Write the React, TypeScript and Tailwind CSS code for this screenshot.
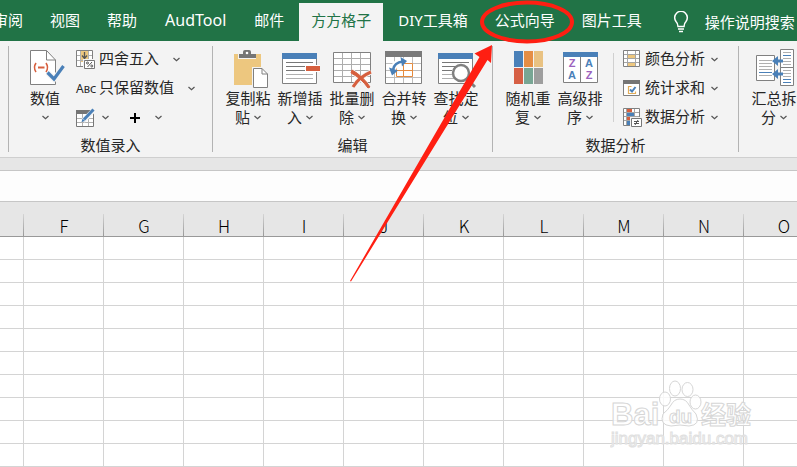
import type { ReactNode } from "react";

const Chevron = () => (
  <svg width="7" height="5" viewBox="0 0 7 5" className="shrink-0" fill="none" stroke="#555" strokeWidth="1.2">
    <path d="M.5 1l3 2.8L6.5 1" />
  </svg>
);

const Big = ({ children }: { children: ReactNode }) => (
  <svg width="40" height="38" viewBox="0 0 40 38" className="shrink-0 overflow-visible" fill="none">
    {children}
  </svg>
);

const Small = ({ children }: { children: ReactNode }) => (
  <svg width="20" height="20" viewBox="0 0 20 20" className="shrink-0 overflow-visible" fill="none">
    {children}
  </svg>
);

const NumberIcon = () => (
  <Big>
    <path d="M5.500.5h16l9 9.500v24.500h-25z" fill="#fff" stroke="#808080" />
    <path d="M21.500.5V10h9" stroke="#808080" />
    <path d="M11 13q-3 4.500 0 9M21 13q3 4.500 0 9" stroke="#d65f3e" strokeWidth="1.6" />
    <path d="M13 17.500h6.500" stroke="#d65f3e" strokeWidth="2" />
    <path d="M22.500 22.500l6.500 6.500L38.500 16" stroke="#f3f3f3" strokeWidth="5.500" />
    <path d="M22.500 22.500l6.500 6.500L38.500 16" stroke="#4a80b8" strokeWidth="3.200" />
  </Big>
);

const PasteIcon = () => (
  <Big>
    <path d="M6 4h27v31H6z" fill="#edc77f" />
    <path d="M10 3h18v6H10z" fill="#f3f3f3" />
    <path d="M11 4h4V2q0-2 2-2h4q2 0 2 2v2h5v4H11z" fill="#757575" />
    <circle cx="19" cy="3" r="1.300" fill="#fff" />
    <path d="M24 17h10l7 7v15H24z" fill="#f3f3f3" />
    <path d="M25.500 18.500h8.500l5.500 5.500v13.500h-14z" fill="#fff" stroke="#808080" />
    <path d="M34 18.500V24h5.500" stroke="#808080" />
  </Big>
);

const InsertIcon = () => (
  <Big>
    <path d="M2.500 3.500h34v30h-34z" fill="#fff" stroke="#808080" />
    <path d="M2 3h35v6H2z" fill="#4a80b8" />
    <path d="M6 12.500h27M6 16.500h27M6 20.500h27" stroke="#777" />
    <path d="M6 24.500h27M6 28.500h27" stroke="#b0b0b0" />
    <path d="M25 15h15v7H25z" fill="#fff" />
    <path d="M26 16h14v5H26z" fill="#d65f3e" />
  </Big>
);

const DeleteIcon = () => (
  <Big>
    <path d="M1.500 2.500h37v30h-37z" fill="#fff" />
    <path d="M10.500 2.500v30M19.500 2.500v30M28.500 2.500v30M1.500 8.500h37M1.500 14.500h37M1.500 20.500h37M1.500 26.500h37" stroke="#adadad" />
    <path d="M1.500 2.500h37v30h-37z" stroke="#808080" />
    <path d="M20 21l18 17M39 22Q27 27 21 38" stroke="#f3f3f3" strokeWidth="5" />
    <path d="M20 20q11 6 18 17l-2 1Q29 28 19 23z" fill="#d65f3e" stroke="#d65f3e" />
    <path d="M39 22q-12 5-18 15" stroke="#d65f3e" strokeWidth="3" />
  </Big>
);

const ConvertIcon = () => (
  <Big>
    <path d="M1.500 1.500h36v32h-36z" fill="#fff" />
    <path d="M10.500 7v26M19.500 7v26M28.500 7v26M1.500 13.500h36M1.500 20.500h36M1.500 27.500h36" stroke="#bdbdbd" />
    <path d="M1.500 1.500h36v32h-36z" stroke="#808080" />
    <path d="M1 1h37v6H1z" fill="#7a7a7a" />
    <path d="M12.500 13.500h16v13h-16zM12.500 20.500h16M19.500 13.500v13" stroke="#e58b3e" fill="#fff" />
    <path d="M9 20Q10 12 20 11.500" stroke="#fff" strokeWidth="6" />
    <path d="M9 20Q10 12.500 19 11.500" stroke="#4a80b8" strokeWidth="2.500" />
    <path d="M16.500 7l6.500 4-5 5.500zM5 17.500l9 3-6 5z" fill="#4a80b8" />
  </Big>
);

const FindIcon = () => (
  <Big>
    <path d="M2.500 3.500h34v30h-34z" fill="#fff" stroke="#808080" />
    <path d="M2 3h35v6H2z" fill="#4a80b8" />
    <path d="M6 12.500h27M6 16.500h15M6 20.500h10" stroke="#777" />
    <path d="M6 24.500h10M6 28.500h14" stroke="#b0b0b0" />
    <path d="M31 28l8 9" stroke="#f3f3f3" strokeWidth="5" />
    <circle cx="25" cy="23" r="8" fill="#fff" stroke="#808080" strokeWidth="2.500" />
    <path d="M31 29l8 8" stroke="#808080" strokeWidth="3" />
  </Big>
);

const ShuffleIcon = () => (
  <Big>
    <path d="M6 1h9v16H6z" fill="#4a80b8" />
    <path d="M16 1h9v16h-9z" fill="#e58e45" />
    <path d="M26 1h9v16h-9z" fill="#e9c282" />
    <path d="M6 18h9v16H6z" fill="#d65f44" />
    <path d="M16 18h9v16h-9z" fill="#78a694" />
    <path d="M26 18h9v16h-9z" fill="#9e9e9e" />
  </Big>
);

const SortIcon = () => (
  <Big>
    <path d="M3.500 2.500h34v30h-34z" fill="#fff" stroke="#808080" />
    <path d="M20.500 7v25" stroke="#808080" />
    <path d="M3 2h35v5H3z" fill="#4a80b8" />
    <g className="font-['Liberation_Sans'] text-[11px] font-bold" textAnchor="middle">
      <text x="12" y="17" fill="#9b62bd">Z</text>
      <text x="12" y="29" fill="#4a80b8">A</text>
      <text x="29" y="17" fill="#4a80b8">A</text>
      <text x="29" y="29" fill="#9b62bd">Z</text>
    </g>
  </Big>
);

const MergeIcon = () => (
  <Big>
    <path d="M2.500 5.500h18v25h-18z" fill="#fff" stroke="#808080" />
    <path d="M5 10.500h13M5 13.500h13M5 16.500h13M5 19.500h13M5 25.500h13" stroke="#b0b0b0" />
    <path d="M5 22.500h13" stroke="#4a80b8" />
    <path d="M26.500-.5h13v18h-13zM26.500 17.500h13v18h-13z" fill="#fff" stroke="#808080" />
    <path d="M29 2.500h8M29 8.500h8M29 11.500h8M29 14.500h8M29 20.500h8M29 23.500h8M29 26.500h8" stroke="#b0b0b0" />
    <path d="M29 5.500h8M29 29.500h8M29 32.500h8" stroke="#4a80b8" />
    <path d="M18 11l6-5v3.500h5v3h-5V16zM18 24l6-5v3.500h5v3h-5V29z" fill="#4a80b8" />
  </Big>
);

const RoundIcon = () => (
  <Small>
    <path d="M.5.5h16v16H.5z" fill="#fff" />
    <path d="M5 0h7v12H5z" fill="#edc77f" />
    <path d="M4.500.5v16M12.500.5v16M.5 5.500h4M12.500 5.500h4M.5 10.500h16" stroke="#b0b0b0" />
    <path d="M.5.500h16v16H.5z" stroke="#808080" />
    <path d="M8.500 2v6M6 5.500l2.500 3 2.500-3" stroke="#555" strokeWidth="1.300" />
    <path d="M7 9h13v11H7z" fill="#f3f3f3" />
    <path d="M8.500 10.500h10v8h-10z" fill="#fff" stroke="#777" />
    <path d="M11.500 17l4.500-5" stroke="#555" />
    <circle cx="11.500" cy="13" r="1" stroke="#555" />
    <circle cx="15.800" cy="16" r="1" stroke="#555" />
  </Small>
);

const EditIcon = () => (
  <Small>
    <path d="M.5 2.500h17v16H.5z" fill="#fff" />
    <path d="M6.500 6v12M12.500 6v12M.5 10.500h17M.5 14.500h17" stroke="#b0b0b0" />
    <path d="M.5 2.500h17v16H.5z" stroke="#777" />
    <path d="M0 2h18v4H0z" fill="#757575" />
    <path d="M7 13L19 1" stroke="#f3f3f3" strokeWidth="5" />
    <path d="M8 11.500L17.500 1.500" stroke="#4a80b8" strokeWidth="3" />
    <path d="M5.500 14l1-3.500 2.500 2.500z" fill="#4a80b8" />
  </Small>
);

const ColorIcon = () => (
  <Small>
    <path d="M1.500.5h16v16h-16z" fill="#fff" />
    <path d="M5 4h8v4H5zM5 12h8v4H5z" fill="#edc77f" />
    <path d="M5.500.5v16M13.500.5v16M1.500 4.500h16M1.500 8.500h16M1.500 12.500h16" stroke="#a5a5a5" />
    <path d="M1.500.5h16v16h-16z" stroke="#808080" />
  </Small>
);

const SumIcon = () => (
  <Small>
    <path d="M1.500 1.500h16v15h-16z" fill="#fff" stroke="#808080" />
    <path d="M1 1h17v4H1z" fill="#757575" />
    <path d="M9.500 7.500h-3v7h7v-2" stroke="#e2ad5a" strokeWidth="1.200" />
    <path d="M8 10.500l2 2L13.500 8" stroke="#4a80b8" strokeWidth="2" />
  </Small>
);

const DataIcon = () => (
  <Small>
    <path d="M1.500.5h16v17h-16z" fill="#fff" />
    <path d="M5 1h5v3H5zM5 9h3v3H5z" fill="#d65f3e" />
    <path d="M5 5h8v3H5zM5 13h3v4H5z" fill="#4a80b8" />
    <path d="M4.500.5v17M12.500.5v9M1.500 4.500h16M1.500 8.500h16M1.500 12.500h7" stroke="#a5a5a5" />
    <path d="M1.500.5h16v17h-16z" stroke="#808080" />
    <path d="M8 9h13v12H8z" fill="#f3f3f3" />
    <path d="M9.500 10.500h10v8h-10z" fill="#fff" stroke="#777" />
    <path d="M12 13.500h5M12 15.500h5M16 12l-3 5" stroke="#555" />
  </Small>
);

const BulbIcon = () => (
  <svg width="16" height="22" viewBox="0 0 16 22" className="shrink-0" fill="none" stroke="#fff" strokeWidth="1.500">
    <path d="M5 15.500q0-3-2-5A6.300 6.300 0 1 1 13 10.500q-2 2-2 5zM5 18h6" />
    <path d="M6 20.500h4" />
  </svg>
);

const tabs = ["审阅", "视图", "帮助", "AudTool", "邮件", "方方格子", "DIY工具箱", "公式向导", "图片工具"];
const columns = ["F", "G", "H", "I", "J", "K", "L", "M", "N", "O"];
const rows = Array.from({ length: 10 }, (_, i) => i);

const tabStyle = (tab: string) => {
  if (tab === "方方格子") return "px-3 bg-[#f3f3f3] text-[#217346]";
  if (tab === "AudTool") return "px-[13px] text-base";
  return "px-3";
};

const BigButton = ({ icon, top, bottom }: { icon: ReactNode; top: string; bottom?: string }) => (
  <button className="flex w-[52px] shrink-0 flex-col items-center pt-[5px] leading-[19px]">
    {icon}
    <span className="mt-px whitespace-nowrap">{top}</span>
    <span className="flex h-[19px] items-center gap-1">
      {bottom}
      <Chevron />
    </span>
  </button>
);

const RowButton = ({ icon, text, wide }: { icon: ReactNode; text?: string; wide?: boolean }) => (
  <button className="flex h-[29px] items-center whitespace-nowrap">
    {icon}
    {text && <span className="ml-[3px] pb-0.5">{text}</span>}
    <span className={wide ? "ml-3.5" : "ml-1.5"}>
      <Chevron />
    </span>
  </button>
);

const Group = ({ label, className, children }: { label?: string; className: string; children: ReactNode }) => (
  <section className="shrink-0 pt-1">
    <div className={`flex h-[87px] ${className}`}>{children}</div>
    <h2 className="mt-1 h-5 text-center leading-[18px]">{label}</h2>
  </section>
);

const Separator = () => <div className="mt-[5px] mb-1 w-px shrink-0 bg-[#b3b3b3]" />;

const BaiduMark = () => (
  <svg width="146" height="74" viewBox="0 0 146 74" className="pointer-events-none absolute top-[378px] right-[41px]" fill="#fff" stroke="#d6d6d6" fillOpacity="0.800">
    <ellipse cx="55" cy="21" rx="5.500" ry="7" />
    <ellipse cx="65" cy="10.500" rx="5.500" ry="7.500" />
    <ellipse cx="77.500" cy="11.500" rx="5.500" ry="7" />
    <ellipse cx="85.500" cy="24" rx="5.500" ry="7" />
    <path d="M70 21q6 0 9 6 3 5 7 9 5 11-7 12-9-2-18 0-12-1-8-12 5-4 8-9 3-6 9-6z" />
    <g className="font-['Liberation_Sans'] font-bold">
      <text x="1" y="47" className="text-[31px]">Bai</text>
      <text x="59" y="45" className="text-[19px]">du</text>
    </g>
    <text x="91" y="46" className="font-['Noto_Sans_CJK_SC'] text-[25px] font-bold">经验</text>
    <text x="1" y="66" stroke="#e0e0e0" className="font-['Liberation_Sans'] text-[17px]">jingyan.baidu.com</text>
  </svg>
);

export default function App() {
  return (
    <div className="relative w-full overflow-hidden bg-white font-['Noto_Sans','Noto_Sans_CJK_SC',sans-serif] text-[15px] text-[#262626]">
      <nav className="-ml-[19px] flex h-[41px] items-end gap-[3px] bg-[#217346] whitespace-nowrap text-white">
        {tabs.map(tab => (
          <button key={tab} className={`h-[38px] shrink-0 pb-1 ${tabStyle(tab)}`}>
            {tab}
          </button>
        ))}
        <button className="ml-3 flex h-[38px] shrink-0 items-center gap-4 px-1">
          <BulbIcon />
          操作说明搜索
        </button>
      </nav>

      <div className="flex overflow-hidden border-b border-[#cfcfcf] bg-[#f3f3f3] pb-px">
        <div className="w-2 shrink-0" />
        <Separator />
        <Group label="数值录入" className="w-[203px] pl-2.5">
          <BigButton icon={<NumberIcon />} top="数值" />
          <div className="ml-[5px]">
            <RowButton icon={<RoundIcon />} text="四舍五入" wide />
            <RowButton icon={<span className="w-5 text-[12px] [font-variant:small-caps]">Abc</span>} text="只保留数值" wide />
            <div className="flex gap-5">
              <RowButton icon={<EditIcon />} />
              <RowButton
                wide
                icon={
                  <svg width="12" height="12" viewBox="0 0 12 12" stroke="#000" strokeWidth="2">
                    <path d="M1 6h10M6 1v10" />
                  </svg>
                }
              />
            </div>
          </div>
        </Group>
        <Separator />
        <Group label="编辑" className="w-[279px] pl-[9px]">
          <BigButton icon={<PasteIcon />} top="复制粘" bottom="贴" />
          <BigButton icon={<InsertIcon />} top="新增插" bottom="入" />
          <BigButton icon={<DeleteIcon />} top="批量删" bottom="除" />
          <BigButton icon={<ConvertIcon />} top="合并转" bottom="换" />
          <BigButton icon={<FindIcon />} top="查找定" bottom="位" />
        </Group>
        <Separator />
        <Group label="数据分析" className="w-[245px] pl-[9px]">
          <BigButton icon={<ShuffleIcon />} top="随机重" bottom="复" />
          <BigButton icon={<SortIcon />} top="高级排" bottom="序" />
          <div className="mr-2 ml-[7px] mt-2 mb-2.5 w-px bg-[#d0d0d0]" />
          <div>
            <RowButton icon={<ColorIcon />} text="颜色分析" />
            <RowButton icon={<SumIcon />} text="统计求和" />
            <RowButton icon={<DataIcon />} text="数据分析" />
          </div>
        </Group>
        <Separator />
        <Group className="pl-[9px]">
          <BigButton icon={<MergeIcon />} top="汇总拆" bottom="分" />
        </Group>
      </div>

      <div className="h-3 bg-[#e6e6e6]" />
      <input aria-label="编辑栏" className="block h-8 w-full border-y border-[#c6c6c6] bg-[#fdfdfd] px-3 outline-none" />

      <table className="w-[824px] table-fixed border-separate border-spacing-0">
        <thead>
          <tr className="bg-[#e6e6e6] text-[17px] text-black">
            <th className="h-[35px] w-6 border-b border-[#999] bg-[linear-gradient(#d4d4d4,#999)] bg-[length:1px_22px] bg-[position:100%_100%] bg-no-repeat" />
            {columns.map(column => (
              <th
                key={column}
                className="h-[35px] w-20 border-b border-[#999] bg-[linear-gradient(#d4d4d4,#999)] bg-[length:1px_22px] bg-[position:100%_100%] bg-no-repeat px-0 pt-3.5 pb-0 font-['Noto_Sans_CJK_SC'] leading-5 font-light"
              >
                {column}
              </th>
            ))}
          </tr>
        </thead>
        <tbody>
          {rows.map(row => (
            <tr key={row}>
              <td className="h-[23px] border-r border-b border-[#d4d4d4] p-0" />
              {columns.map(column => (
                <td key={column} className="h-[23px] border-r border-b border-[#d4d4d4] p-0" />
              ))}
            </tr>
          ))}
        </tbody>
      </table>

      <BaiduMark />

      <svg width="240" height="290" viewBox="340 0 240 290" className="pointer-events-none absolute top-0 left-[340px]">
        <ellipse cx="527" cy="22" rx="45" ry="19.500" fill="none" stroke="#ff1f12" strokeWidth="4" />
        <path d="M492 45L474.500 53.500l5 3.500L350 281l1 .5L487.500 60l3.500 3z" fill="#ff1f12" />
      </svg>
    </div>
  );
}
